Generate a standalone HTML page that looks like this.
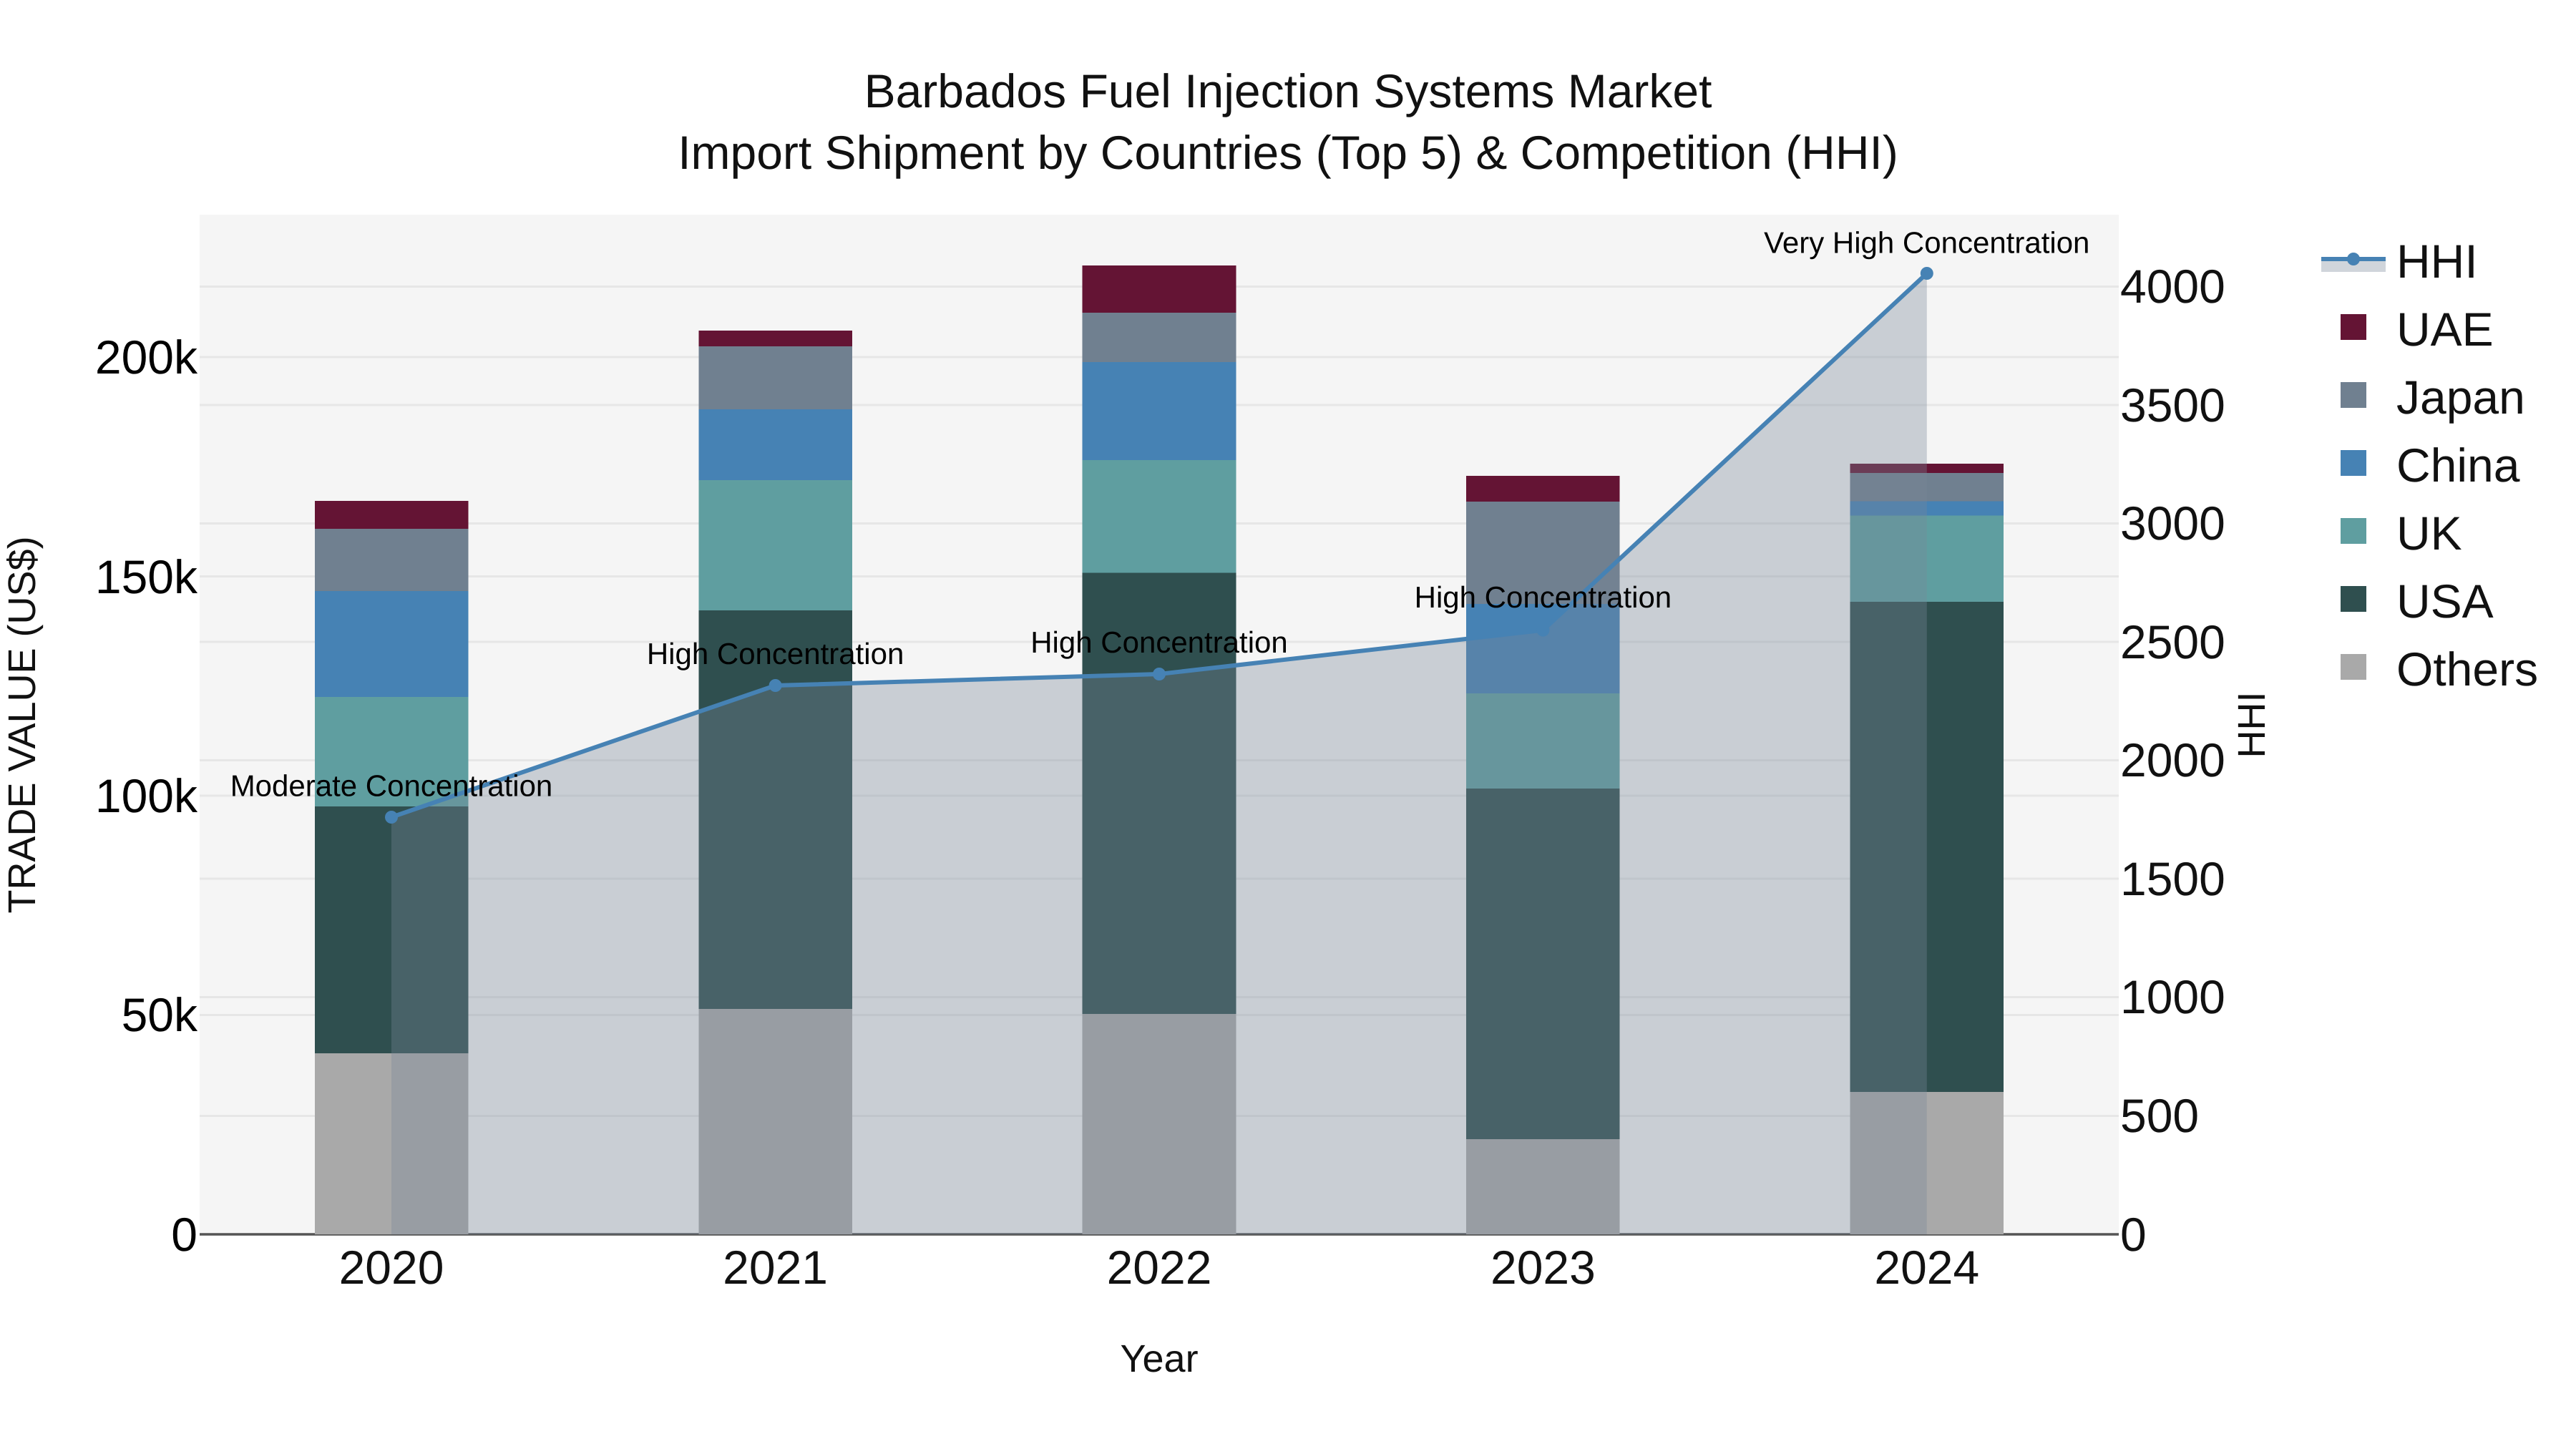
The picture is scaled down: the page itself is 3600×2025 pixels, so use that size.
<!DOCTYPE html>
<html>
<head>
<meta charset="utf-8">
<title>Barbados Fuel Injection Systems Market</title>
<style>
html,body{margin:0;padding:0;background:#fff;width:3600px;height:2025px;overflow:hidden}
svg{display:block}
text{font-family:"Liberation Sans",Arial,sans-serif;text-rendering:geometricPrecision}
</style>
</head>
<body>
<svg xmlns="http://www.w3.org/2000/svg" width="3600" height="2025" viewBox="0 0 3600 2025">
<rect width="3600" height="2025" fill="#fff"/>
<rect x="279" y="300" width="2682" height="1425" fill="#f5f5f5"/>
<g stroke="#e6e6e6" stroke-width="3" fill="none">
<path d="M279 400.5H2961M279 566H2961M279 731.5H2961M279 897H2961M279 1062.5H2961M279 1228H2961M279 1393.5H2961M279 1559.5H2961"/>
<path d="M279 499H2961M279 805.5H2961M279 1112H2961M279 1418.5H2961"/>
</g>
<path d="M279 1725H2961" stroke="#555" stroke-width="3.5" fill="none"/>
<g shape-rendering="crispEdges">
<!-- 2020 -->
<rect x="440" y="1472" width="214.6" height="253" fill="#A9A9A9"/>
<rect x="440" y="1127" width="214.6" height="345" fill="#2F4F4F"/>
<rect x="440" y="974" width="214.6" height="153" fill="#5F9EA0"/>
<rect x="440" y="826" width="214.6" height="148" fill="#4682B4"/>
<rect x="440" y="739" width="214.6" height="87" fill="#708090"/>
<rect x="440" y="700" width="214.6" height="39" fill="#641434"/>
<!-- 2021 -->
<rect x="976.3" y="1410" width="214.6" height="315" fill="#A9A9A9"/>
<rect x="976.3" y="853" width="214.6" height="557" fill="#2F4F4F"/>
<rect x="976.3" y="671" width="214.6" height="182" fill="#5F9EA0"/>
<rect x="976.3" y="572" width="214.6" height="99" fill="#4682B4"/>
<rect x="976.3" y="484" width="214.6" height="88" fill="#708090"/>
<rect x="976.3" y="462" width="214.6" height="22" fill="#641434"/>
<!-- 2022 -->
<rect x="1512.7" y="1417" width="214.6" height="308" fill="#A9A9A9"/>
<rect x="1512.7" y="800.5" width="214.6" height="616.5" fill="#2F4F4F"/>
<rect x="1512.7" y="643" width="214.6" height="157.5" fill="#5F9EA0"/>
<rect x="1512.7" y="506" width="214.6" height="137" fill="#4682B4"/>
<rect x="1512.7" y="437" width="214.6" height="69" fill="#708090"/>
<rect x="1512.7" y="371" width="214.6" height="66" fill="#641434"/>
<!-- 2023 -->
<rect x="2049" y="1592" width="214.6" height="133" fill="#A9A9A9"/>
<rect x="2049" y="1102" width="214.6" height="490" fill="#2F4F4F"/>
<rect x="2049" y="969" width="214.6" height="133" fill="#5F9EA0"/>
<rect x="2049" y="844" width="214.6" height="125" fill="#4682B4"/>
<rect x="2049" y="701" width="214.6" height="143" fill="#708090"/>
<rect x="2049" y="665" width="214.6" height="36" fill="#641434"/>
<!-- 2024 -->
<rect x="2585.5" y="1526" width="214.6" height="199" fill="#A9A9A9"/>
<rect x="2585.5" y="841" width="214.6" height="685" fill="#2F4F4F"/>
<rect x="2585.5" y="720.5" width="214.6" height="120.5" fill="#5F9EA0"/>
<rect x="2585.5" y="700.5" width="214.6" height="20" fill="#4682B4"/>
<rect x="2585.5" y="661" width="214.6" height="39.5" fill="#708090"/>
<rect x="2585.5" y="648" width="214.6" height="13" fill="#641434"/>
</g>
<polygon points="547,1725 547,1142 1083.6,958 1620,942 2156.4,880.6 2692.8,382 2692.8,1725" fill="#778899" fill-opacity="0.35"/>
<polyline points="547,1142 1083.6,958 1620,942 2156.4,880.6 2692.8,382" fill="none" stroke="#4682B4" stroke-width="6" stroke-linejoin="round"/>
<g fill="#4682B4">
<circle cx="547" cy="1142" r="9"/>
<circle cx="1083.6" cy="958" r="9"/>
<circle cx="1620" cy="942" r="9"/>
<circle cx="2156.4" cy="880.6" r="9"/>
<circle cx="2692.8" cy="382" r="9"/>
</g>
<g font-size="42" fill="#000" text-anchor="middle">
<text x="547" y="1112.5">Moderate Concentration</text>
<text x="1083.6" y="928">High Concentration</text>
<text x="1620" y="912">High Concentration</text>
<text x="2156.4" y="849">High Concentration</text>
<text x="2692.8" y="353.5">Very High Concentration</text>
</g>
<g font-size="66" fill="#111" text-anchor="middle">
<text x="1800" y="150">Barbados Fuel Injection Systems Market</text>
<text x="1800" y="236">Import Shipment by Countries (Top 5) &amp; Competition (HHI)</text>
</g>
<g font-size="66" fill="#000" text-anchor="end">
<text x="276" y="522">200k</text>
<text x="276" y="829">150k</text>
<text x="276" y="1135">100k</text>
<text x="276" y="1441">50k</text>
<text x="276" y="1748">0</text>
</g>
<g font-size="66" fill="#111" text-anchor="start">
<text x="2963" y="423">4000</text>
<text x="2963" y="589">3500</text>
<text x="2963" y="754">3000</text>
<text x="2963" y="920">2500</text>
<text x="2963" y="1085">2000</text>
<text x="2963" y="1251">1500</text>
<text x="2963" y="1416">1000</text>
<text x="2963" y="1582">500</text>
<text x="2963" y="1748">0</text>
</g>
<g font-size="66" fill="#111" text-anchor="middle">
<text x="547" y="1794">2020</text>
<text x="1083.6" y="1794">2021</text>
<text x="1620" y="1794">2022</text>
<text x="2156.4" y="1794">2023</text>
<text x="2692.8" y="1794">2024</text>
</g>
<text x="1628" y="1917" font-size="54" fill="#111" text-anchor="middle" transform="translate(-8 0)">Year</text>
<text transform="translate(49 1013) rotate(-90)" font-size="54" fill="#111" text-anchor="middle">TRADE VALUE (US$)</text>
<text transform="translate(3165 1013) rotate(-90)" font-size="54" fill="#111" text-anchor="middle">HHI</text>
<!-- legend -->
<rect x="3244" y="360" width="90" height="20" fill="#778899" fill-opacity="0.35"/>
<path d="M3244 362H3334" stroke="#4682B4" stroke-width="6" fill="none"/>
<circle cx="3289" cy="362" r="9" fill="#4682B4"/>
<g shape-rendering="crispEdges">
<rect x="3271" y="439" width="36" height="36" fill="#641434"/>
<rect x="3271" y="534" width="36" height="36" fill="#708090"/>
<rect x="3271" y="629" width="36" height="36" fill="#4682B4"/>
<rect x="3271" y="724" width="36" height="36" fill="#5F9EA0"/>
<rect x="3271" y="819" width="36" height="36" fill="#2F4F4F"/>
<rect x="3271" y="914" width="36" height="36" fill="#A9A9A9"/>
</g>
<g font-size="66" fill="#111">
<text x="3349" y="388">HHI</text>
<text x="3349" y="483">UAE</text>
<text x="3349" y="578">Japan</text>
<text x="3349" y="673">China</text>
<text x="3349" y="768">UK</text>
<text x="3349" y="863">USA</text>
<text x="3349" y="958">Others</text>
</g>
</svg>
</body>
</html>
